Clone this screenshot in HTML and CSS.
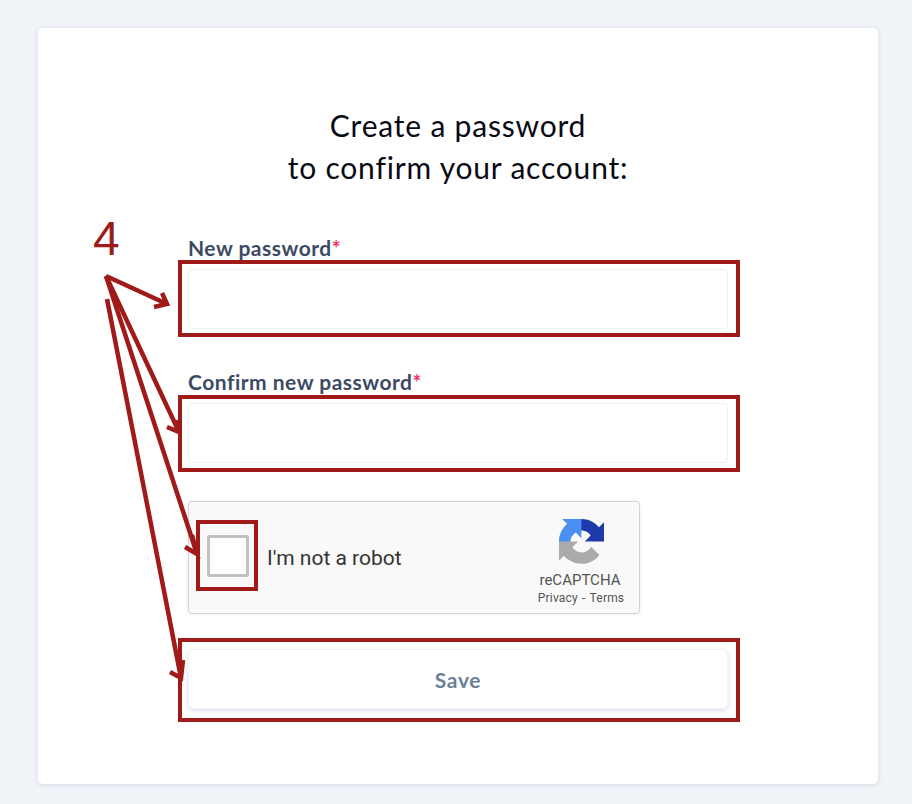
FILE: index.html
```html
<!DOCTYPE html>
<html lang="en">
<head>
    <meta charset="UTF-8">
    <meta name="viewport" content="width=device-width, initial-scale=1.0">
    <title>Create a password</title>
    <link rel="stylesheet" href="styles.css">
</head>
<body>

<div class="card">
    <h1>Create a password<br>to confirm your account:</h1>

    <div class="field">
        <label for="pass1">New password<span class="req">*</span></label>
        <input type="password" id="pass1">
    </div>
    <div class="field">
        <label for="pass2">Confirm new password<span class="req">*</span></label>
        <input type="password" id="pass2">
    </div>

    <div class="captcha">
        <div class="captcha-box"></div>
        <div class="captcha-text">I'm not a robot</div>
        <div class="captcha-brand">
            <svg class="captcha-logo" width="45" height="45" viewBox="0 0 64 64">
                <path fill="#1c3aa9" d="M64 31.955l-.033-1.37V4.687l-7.16 7.16C50.948 4.674 42.033.093 32.05.093c-10.4 0-19.622 4.96-25.458 12.64l11.736 11.86a15.55 15.55 0 0 1 4.754-5.334c2.05-1.6 4.952-2.906 8.968-2.906.485 0 .86.057 1.135.163 4.976.393 9.288 3.14 11.828 7.124l-8.307 8.307c10.522-.04 22.4-.066 27.295.006"/>
                <path fill="#4a90f2" d="M31.862.001l-1.37.033H4.594l7.16 7.16C4.58 13.053 0 21.968 0 31.95c0 10.4 4.96 19.622 12.64 25.458l11.86-11.736a15.55 15.55 0 0 1-5.334-4.754c-1.6-2.05-2.906-4.952-2.906-8.968 0-.485.057-.86.163-1.135.393-4.976 3.14-9.288 7.124-11.828l8.307 8.307c-.04-10.522-.066-22.4.006-27.295"/>
                <path fill="#ababab" d="M.002 31.953l.033 1.37v25.898l7.16-7.16c5.86 7.173 14.775 11.754 24.76 11.754 10.4 0 19.622-4.96 25.458-12.64l-11.736-11.86a15.55 15.55 0 0 1-4.754 5.334c-2.05 1.6-4.952 2.906-8.968 2.906-.485 0-.86-.057-1.135-.163-4.976-.393-9.288-3.14-11.828-7.124l8.307-8.307c-10.522.04-22.4.066-27.295-.006"/>
            </svg>
            <div class="captcha-name">reCAPTCHA</div>
            <div class="captcha-links">Privacy - Terms</div>
        </div>
    </div>

    <button class="save-btn">Save</button>
</div>

<div class="step-num">4</div>
<svg class="marks" width="912" height="804" viewBox="0 0 912 804">
    <g fill="none" stroke="#a01a1a" stroke-width="4">
        <rect x="180" y="262" width="558" height="73"/>
        <rect x="180" y="397" width="558" height="73"/>
        <rect x="198" y="522" width="58" height="67"/>
        <rect x="180" y="640" width="558" height="80"/>
    </g>
    <g fill="none" stroke="#a01a1a" stroke-width="4.5">
        <path d="M106 276 L167 304 M162 293 L167 304 L154 307"/>
        <path d="M106 276 L179 432 M167 427 L179 432 L177 420"/>
        <path d="M106 276 L197 554 M185 547 L197 554 L192 535"/>
        <path d="M107 299 L181 678 M170 672 L181 678 L183 660"/>
    </g>
</svg>

</body>
</html>
```

FILE: styles.css
```css
body {
    font-family: Lato, sans-serif;
    margin: 0;
    padding: 28px 34px 20px 38px;
    background-color: #f0f3f7;
    position: relative;
}
.card {
    box-sizing: border-box;
    width: 840px;
    height: 756px;
    padding: 76px 150px 0;
    background: white;
    border-radius: 5px;
    box-shadow: 0 1px 4px rgba(170, 185, 205, 0.4);
}
h1 {
    margin: 0 0 48px;
    font-size: 30px;
    font-weight: 400;
    line-height: 42px;
    letter-spacing: 0.8px;
    text-align: center;
    color: #0a0a14;
}
.field {
    margin-bottom: 38px;
}
.field + .field {
    margin-top: 41px;
}
.field label {
    display: block;
    height: 24px;
    margin-bottom: 9px;
    font-size: 21px;
    font-weight: 700;
    line-height: 24px;
    letter-spacing: 0.5px;
    color: #3d4a63;
}
.req {
    color: #f0306a;
}
.field input {
    display: block;
    box-sizing: border-box;
    width: 540px;
    height: 60px;
    border: 1px solid #eef0f3;
    border-radius: 4px;
    background: white;
}
.captcha {
    box-sizing: border-box;
    display: flex;
    align-items: flex-start;
    width: 452px;
    height: 113px;
    border: 1px solid #d3d3d3;
    border-radius: 4px;
    background: #f9f9f9;
    box-shadow: 0 0 4px rgba(0, 0, 0, 0.08);
    font-family: Roboto, sans-serif;
}
.captcha-box {
    box-sizing: border-box;
    width: 42px;
    height: 42px;
    margin: 33px 0 0 18px;
    border: 3px solid #c1c1c1;
    border-radius: 3px;
    background: white;
}
.captcha-text {
    margin: 44px 0 0 18px;
    font-size: 21px;
    line-height: 24px;
    color: #333;
}
.captcha-brand {
    margin-left: auto;
    width: 100px;
    margin-right: 9px;
    text-align: center;
    color: #555;
}
.captcha-logo {
    display: block;
    margin: 17px 0 0 28.500px;
}
.captcha-name {
    margin-top: 7px;
    font-size: 15px;
    line-height: 18px;
}
.captcha-links {
    padding-left: 2px;
    font-size: 12px;
    line-height: 18px;
    letter-spacing: 0.2px;
    word-spacing: 1px;
}
.save-btn {
    display: block;
    width: 540px;
    height: 60px;
    margin-top: 35px;
    padding-top: 2px;
    border: 1px solid #f1f3f7;
    border-radius: 5px;
    background: white;
    box-shadow: 0 2px 5px rgba(150, 170, 200, 0.35);
    font-family: Lato, sans-serif;
    font-size: 21px;
    font-weight: 700;
    letter-spacing: 0.7px;
    color: #6b7f99;
}
.step-num {
    position: absolute;
    left: 93px;
    top: 210px;
    font-family: "Liberation Sans", sans-serif;
    font-size: 48px;
    line-height: 58px;
    color: #a01a1a;
}
.marks {
    position: absolute;
    left: 0;
    top: 0;
}
```
